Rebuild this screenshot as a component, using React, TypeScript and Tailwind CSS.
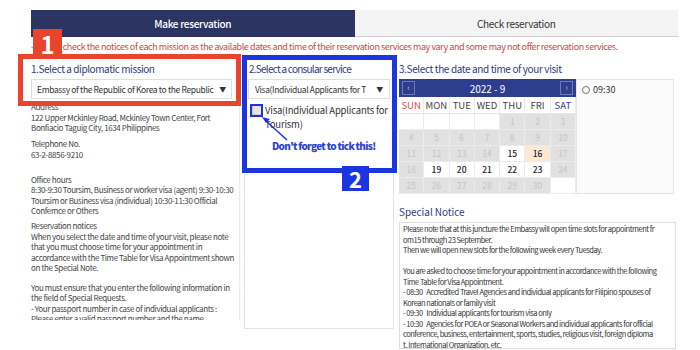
import React from 'react';

const font = { fontFamily: '"Noto Sans CJK KR", "Noto Sans", sans-serif' };

type Cell = { d?: number; kind: 'empty' | 'off' | 'on' | 'today' };

const weeks: Cell[][] = [
  [{ kind: 'empty' }, { kind: 'empty' }, { kind: 'empty' }, { kind: 'empty' }, { d: 1, kind: 'off' }, { d: 2, kind: 'off' }, { d: 3, kind: 'off' }],
  [4, 5, 6, 7, 8, 9, 10].map((d) => ({ d, kind: 'off' as const })),
  [
    { d: 11, kind: 'off' }, { d: 12, kind: 'off' }, { d: 13, kind: 'off' }, { d: 14, kind: 'off' },
    { d: 15, kind: 'on' }, { d: 16, kind: 'today' }, { d: 17, kind: 'off' },
  ],
  [
    { d: 18, kind: 'off' }, { d: 19, kind: 'on' }, { d: 20, kind: 'on' }, { d: 21, kind: 'on' },
    { d: 22, kind: 'on' }, { d: 23, kind: 'on' }, { d: 24, kind: 'off' },
  ],
  [
    { d: 25, kind: 'off' }, { d: 26, kind: 'off' }, { d: 27, kind: 'off' }, { d: 28, kind: 'off' },
    { d: 29, kind: 'off' }, { d: 30, kind: 'off' }, { kind: 'empty' },
  ],
];

const cellClass = {
  empty: 'bg-white',
  off: 'bg-[#e1e1e1] text-[#c4c4c4]',
  on: 'bg-white text-[#222] font-medium',
  today: 'bg-[#fce6d4] text-[#222] font-medium',
};

const heading = 'h-[16px] leading-[16px] text-[#313a7c] whitespace-nowrap';

function Calendar() {
  return (
    <div className="flex mt-[2px]">
      <div className="w-[177px]">
        <div className="h-[18px] bg-[#2f3d8e] flex items-center justify-between px-[3px]">
          <div className="w-[13px] h-[14px] border border-[#6d79b8] text-[#aab2dd] text-[9px] leading-[12px] text-center">&lsaquo;</div>
          <div className="text-white text-[10px]">2022 - 9</div>
          <div className="w-[13px] h-[14px] border border-[#6d79b8] text-[#aab2dd] text-[9px] leading-[12px] text-center">&rsaquo;</div>
        </div>
        <div className="grid grid-cols-7 h-[17px] border-b border-[#e6e6e6]">
          {['SUN', 'MON', 'TUE', 'WED', 'THU', 'FRI', 'SAT'].map((d, i) => (
            <div
              key={d}
              className={`flex items-center justify-center text-[9.5px] border-r border-[#ececec] ${
                i === 0 ? 'text-[#d84b4b]' : i === 6 ? 'text-[#2f3d8e]' : 'text-[#444]'
              }`}
            >
              {d}
            </div>
          ))}
        </div>
        {weeks.map((w, wi) => (
          <div key={wi} className="grid grid-cols-7 h-[16px]">
            {w.map((c, ci) => (
              <div
                key={ci}
                className={`flex items-center justify-center text-[8.5px] border-r border-b border-[#ebebeb] ${cellClass[c.kind]}`}
              >
                {c.d ?? ''}
              </div>
            ))}
          </div>
        ))}
      </div>
      <div className="w-[98px] h-[115px] bg-[#fbfbfb] border border-[#e6e6e6] px-[5px] pt-[3px]">
        <div className="flex items-center gap-[3px] text-[9px] text-[#333]">
          <span className="w-[8px] h-[8px] rounded-full border border-[#777] inline-block" />
          09:30
        </div>
      </div>
    </div>
  );
}

export default function App() {
  return (
    <div className="w-[700px] h-[350px] bg-white relative overflow-hidden" style={font}>
      <div className="ml-[31px] w-[647px] pt-[10px]">
        {/* tabs */}
        <div className="flex h-[27px] text-[10px] tracking-[-0.3px]">
          <div className="flex-1 bg-[#2c3461] text-white flex items-center justify-center font-medium">Make reservation</div>
          <div className="flex-1 bg-[#f3f3f3] text-[#333] flex items-center justify-center border-b border-[#cfcfcf]">Check reservation</div>
        </div>

        <div className="h-[19px] flex items-center text-[9px] tracking-[-0.42px] text-[#d64541] whitespace-nowrap">
          <span>-</span>
          <span className="ml-[29px]">
            check the notices of each mission as the available dates and time of their reservation services may vary and some may not offer reservation services.
          </span>
        </div>

        <div className="flex">
          {/* column 1 */}
          <div className="w-[209px] pt-[5px]">
            <div className={`${heading} text-[10px] tracking-[-0.43px]`}>1.Select a diplomatic mission</div>
            <div className="mt-[2px] w-[201px] h-[20px] border border-[#dedede] flex items-center justify-between px-[5px] text-[8.5px] tracking-[-0.35px] text-[#333]">
              <span className="whitespace-nowrap overflow-hidden">Embassy of the Republic of Korea to the Republic</span>
              <span className="text-[7px] ml-[2px]">▼</span>
            </div>
            <div className="h-[221px] overflow-hidden pt-[3px] text-[8px] tracking-[-0.38px] leading-[10.5px] text-[#444] whitespace-nowrap border-r border-[#ececec]">
              <p>Address</p>
              <p>122 Upper Mckinley Road, Mckinley Town Center, Fort</p>
              <p>Bonfiacio Taguig City, 1634 Philippines</p>
              <p className="mt-[5.5px]">Telephone No.</p>
              <p>63-2-8856-9210</p>
              <p className="mt-[14.5px]">Office hours</p>
              <p>8:30-9:30 Toursim, Business or worker visa (agent) 9:30-10:30</p>
              <p>Toursim or Business visa (individual) 10:30-11:30 Official</p>
              <p>Confernce or Others</p>
              <p className="mt-[4.5px]">Reservation notices</p>
              <p>When you select the date and time of your visit, please note</p>
              <p>that you must choose time for your appointment in</p>
              <p>accordance with the Time Table for Visa Appointment shown</p>
              <p>on the Special Note.</p>
              <p className="mt-[9px]">You must ensure that you enter the following information in</p>
              <p>the field of Special Requests.</p>
              <p>- Your passport number in case of individual applicants :</p>
              <p>Please enter a valid passport number and the name</p>
            </div>
          </div>

          {/* column 2 */}
          <div className="w-[150px] ml-[4px] pt-[5px]">
            <div className={`px-[5px] ${heading} text-[10px] tracking-[-0.75px]`}>2.Select a consular service</div>
            <div className="mx-[4px] mt-[2px] h-[20px] border border-[#dedede] flex items-center justify-between px-[6px] text-[8.5px] tracking-[-0.35px] text-[#333]">
              <span className="whitespace-nowrap overflow-hidden">Visa(Individual Applicants for T</span>
              <span className="text-[7px] ml-[3px]">▼</span>
            </div>
            <div className="h-[230px] border-x border-b border-[#e3e3e3] pl-[7px] pt-[4px]">
              <div className="flex items-start gap-[2px] text-[9.5px] tracking-[-0.2px] leading-[14px] text-[#333] whitespace-nowrap">
                <span className="mt-[1px] w-[11px] h-[11px] shrink-0 bg-[#e4e4e4] border border-[#c9c9c9]" />
                <div>
                  <p>Visa(Individual Applicants for</p>
                  <p>Tourism)</p>
                </div>
              </div>
            </div>
          </div>

          {/* column 3 */}
          <div className="w-[277px] ml-[5px] pt-[5px]">
            <div className={`${heading} text-[10px] tracking-[-0.38px]`}>3.Select the date and time of your visit</div>
            <Calendar />
            <div className={`mt-[10px] ${heading} text-[10px] tracking-[-0.05px]`}>Special Notice</div>
            <div className="mt-[2px] h-[127px] border border-[#dddddd] px-[3px] pt-[1px] text-[7.5px] tracking-[-0.48px] leading-[10.5px] text-[#333] whitespace-nowrap overflow-hidden">
              <p>Please note that at this juncture the Embassy will open time slots for appointment fr</p>
              <p>om15 through 23 September.</p>
              <p>Then we will open new slots for the following week every Tuesday.</p>
              <p>&nbsp;</p>
              <p>You are asked to choose time for your appointment in accordance with the following</p>
              <p>Time Table for Visa Appointment.</p>
              <p>- 08:30&nbsp;&nbsp;&nbsp;Accredited Travel Agencies and individual applicants for Filipino spouses of</p>
              <p>Korean nationals or family visit</p>
              <p>- 09:30&nbsp;&nbsp;&nbsp;Individual applicants for tourism visa only</p>
              <p>- 10:30&nbsp;&nbsp;&nbsp;Agencies for POEA or Seasonal Workers and individual applicants for official</p>
              <p>conference, business, entertainment, sports, studies, religious visit, foreign diploma</p>
              <p>t, International Organization, etc.</p>
            </div>
          </div>
        </div>
      </div>

      {/* annotation overlays */}
      <div className="absolute left-[18px] top-[54px] w-[223px] h-[52px] border-[5px] border-[#e8452c]" />
      <div className="absolute left-[33px] top-[29px] w-[29px] h-[29px] bg-[#e8452c] text-white font-bold text-[24px] leading-[29px] text-center">1</div>

      <div className="absolute left-[242px] top-[55px] w-[155px] h-[118px] border-[5px] border-[#1b36e0]" />
      <div className="absolute left-[342px] top-[166px] w-[27px] h-[25px] bg-[#1b36e0] text-white font-bold text-[22px] leading-[25px] text-center">2</div>
      <div className="absolute left-[250px] top-[104px] w-[13px] h-[13px] border-2 border-[#1b36e0]" />
      <svg className="absolute left-0 top-0" width="700" height="350">
        <line x1="287" y1="140" x2="265" y2="120" stroke="#1b36e0" strokeWidth="1.5" />
        <polygon points="262,117 270,119 266,123" fill="#1b36e0" />
      </svg>
      <div className="absolute left-[272px] top-[138px] text-[10px] tracking-[-0.7px] font-black text-[#2a3fd8] whitespace-nowrap">Don't forget to tick this!</div>
    </div>
  );
}
